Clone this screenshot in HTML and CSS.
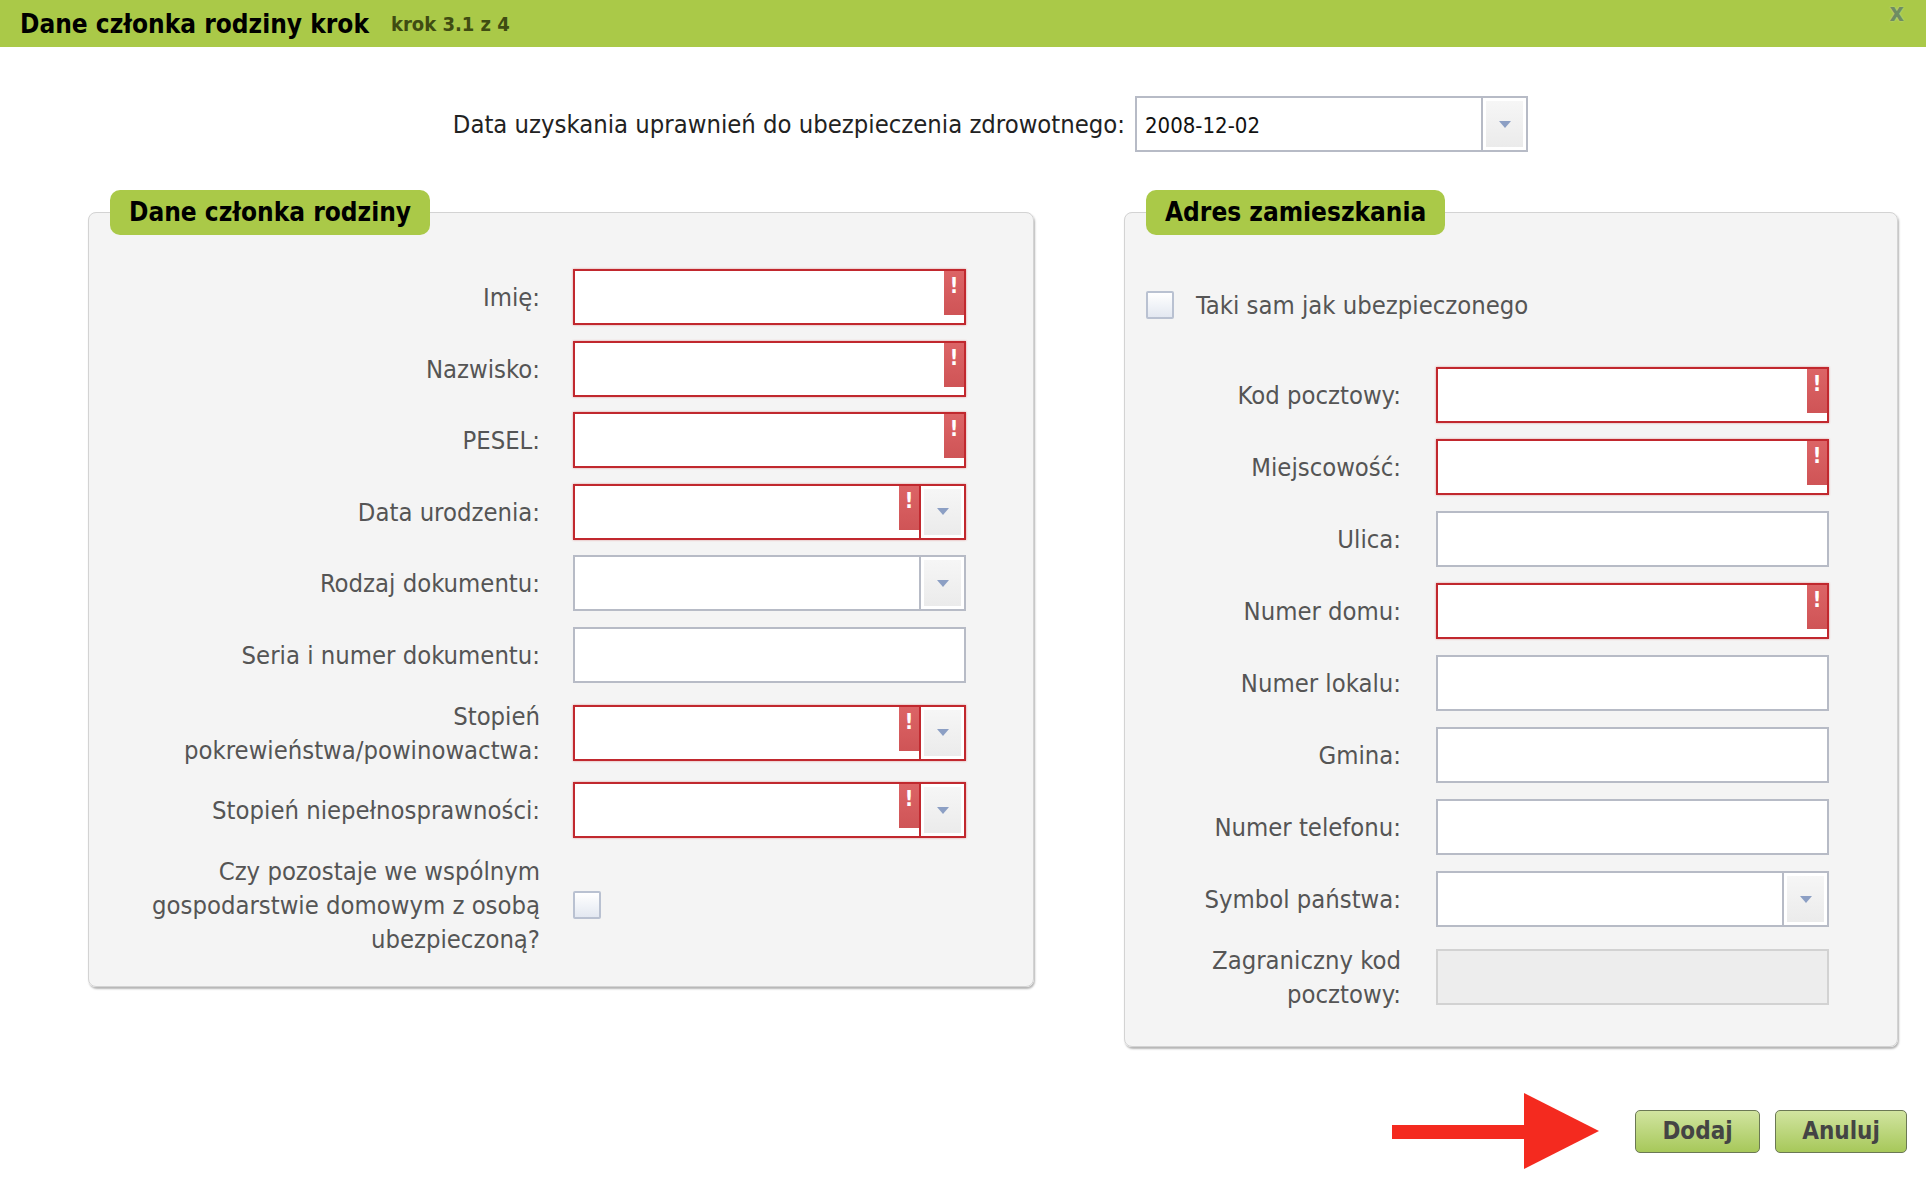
FILE: index.html
```html
<!DOCTYPE html>
<html lang="pl">
<head>
  <meta charset="UTF-8">
  <title>Dane członka rodziny</title>
  <link rel="stylesheet" href="styles.css">
</head>
<body>
  <div class="dialog">
    <!-- Title bar -->
    <div class="titlebar">
      <span class="title">Dane członka rodziny krok</span>
      <span class="step">krok 3.1 z 4</span>
      <span class="close">x</span>
    </div>

    <!-- Date of entitlement -->
    <div class="top-row">
      <label class="top-label">Data uzyskania uprawnień do ubezpieczenia zdrowotnego:</label>
      <div class="combo combo-date">
        <div class="field"><span class="value">2008-12-02</span></div>
        <div class="drop"><span class="drop-inner"><i class="tri"></i></span></div>
      </div>
    </div>

    <div class="panels">
      <!-- Family member -->
      <fieldset class="panel panel-left">
        <legend>Dane członka rodziny</legend>
        <div class="form form-left">
          <label>Imię:</label>
          <div class="input error"><span class="err">!</span></div>

          <label>Nazwisko:</label>
          <div class="input error"><span class="err">!</span></div>

          <label>PESEL:</label>
          <div class="input error"><span class="err">!</span></div>

          <label>Data urodzenia:</label>
          <div class="combo error">
            <div class="field"><span class="err">!</span></div>
            <div class="drop"><span class="drop-inner"><i class="tri"></i></span></div>
          </div>

          <label>Rodzaj dokumentu:</label>
          <div class="combo">
            <div class="field"></div>
            <div class="drop"><span class="drop-inner"><i class="tri"></i></span></div>
          </div>

          <label>Seria i numer dokumentu:</label>
          <div class="input"></div>

          <label>Stopień<br>pokrewieństwa/powinowactwa:</label>
          <div class="combo error">
            <div class="field"><span class="err">!</span></div>
            <div class="drop"><span class="drop-inner"><i class="tri"></i></span></div>
          </div>

          <label>Stopień niepełnosprawności:</label>
          <div class="combo error">
            <div class="field"><span class="err">!</span></div>
            <div class="drop"><span class="drop-inner"><i class="tri"></i></span></div>
          </div>

          <label>Czy pozostaje we wspólnym<br>gospodarstwie domowym z osobą<br>ubezpieczoną?</label>
          <div><span class="check"></span></div>
        </div>
      </fieldset>

      <!-- Address -->
      <fieldset class="panel panel-right">
        <legend>Adres zamieszkania</legend>
        <div class="same-row">
          <span class="check"></span>
          <span class="same-text">Taki sam jak ubezpieczonego</span>
        </div>
        <div class="form form-right">
          <label>Kod pocztowy:</label>
          <div class="input error"><span class="err">!</span></div>

          <label>Miejscowość:</label>
          <div class="input error"><span class="err">!</span></div>

          <label>Ulica:</label>
          <div class="input"></div>

          <label>Numer domu:</label>
          <div class="input error"><span class="err">!</span></div>

          <label>Numer lokalu:</label>
          <div class="input"></div>

          <label>Gmina:</label>
          <div class="input"></div>

          <label>Numer telefonu:</label>
          <div class="input"></div>

          <label>Symbol państwa:</label>
          <div class="combo">
            <div class="field"></div>
            <div class="drop"><span class="drop-inner"><i class="tri"></i></span></div>
          </div>

          <label>Zagraniczny kod<br>pocztowy:</label>
          <div class="input disabled"></div>
        </div>
      </fieldset>
    </div>

    <!-- Buttons -->
    <div class="actions">
      <svg class="arrow" width="207" height="76" viewBox="0 0 207 76">
        <rect x="0" y="32" width="136" height="14" fill="#f42a1f"/>
        <polygon points="132,0 207,38 132,76" fill="#f42a1f"/>
      </svg>
      <button class="btn btn-add">Dodaj</button>
      <button class="btn btn-cancel">Anuluj</button>
    </div>
  </div>
</body>
</html>
```

FILE: styles.css
```css
/* Reset */
* {
  margin: 0;
  padding: 0;
  box-sizing: border-box;
}

body {
  background: #ffffff;
  font-family: "DejaVu Sans Condensed", "DejaVu Sans", sans-serif;
  font-stretch: condensed;
  width: 1926px;
  height: 1188px;
  overflow: hidden;
}

/* Title bar */
.titlebar {
  display: flex;
  align-items: center;
  height: 47px;
  background: #aac948;
  padding: 0 22px 0 20px;
}

.title {
  font-size: 26px;
  font-weight: bold;
  color: #000;
}

.step {
  margin-left: 22px;
  font-size: 20px;
  font-weight: bold;
  color: #3f4c12;
}

.close {
  margin-left: auto;
  align-self: flex-start;
  margin-top: -2px;
  font-size: 25px;
  font-weight: bold;
  color: #6f8d62;
  text-shadow: 0 0 2px #c9dc98;
}

/* Top date row */
.top-row {
  display: flex;
  align-items: center;
  margin-top: 49px;
}

.top-label {
  flex: 0 0 1135px;
  padding-right: 10px;
  text-align: right;
  font-size: 25.4px;
  color: #222;
}

.combo-date {
  width: 393px;
  height: 59px;
  border-color: #bfc3cc;
}

.combo-date .value {
  display: block;
  padding: 15px 0 0 8px;
  font-size: 22px;
  color: #111;
}

/* Panels */
.panels {
  display: flex;
  align-items: flex-start;
  gap: 90px;
  margin-top: 38px;
  padding-left: 88px;
}

.panel {
  background: #f4f4f4;
  border: 1px solid #d3d3d3;
  border-radius: 8px;
  box-shadow: 1px 2px 2px #b5b5b5;
}

.panel legend {
  margin-left: 21px;
  height: 45px;
  padding: 0 19px;
  line-height: 45px;
  background: #aac948;
  border-radius: 10px;
  font-size: 26px;
  font-weight: bold;
  color: #000;
}

.panel-left {
  width: 946px;
  padding: 34px 0 30px;
}

.panel-right {
  width: 774px;
  padding: 0 0 35px;
}

/* Form grids */
.form {
  display: grid;
  row-gap: 16px;
  align-items: center;
}

.form-left {
  grid-template-columns: 451px 393px;
  column-gap: 33px;
  row-gap: 15.6px;
}

.form-right {
  grid-template-columns: 276px 393px;
  column-gap: 35px;
}

.form label {
  text-align: right;
  font-size: 25.4px;
  line-height: 34px;
  color: #555;
}

.same-row {
  display: flex;
  align-items: center;
  gap: 22px;
  padding: 55px 0 0 21px;
  margin-bottom: 47px;
}

.same-text {
  font-size: 25.4px;
  color: #555;
}

/* Inputs */
.input,
.combo {
  position: relative;
  height: 56px;
  background: #fff;
  border: 2px solid #b7bbc6;
}

.combo {
  display: flex;
}

.combo .field {
  position: relative;
  flex: 1;
}

.combo .drop {
  width: 45px;
  border-left: 2px solid #b7bbc6;
  padding: 3px;
  background: #fff;
}

.drop-inner {
  display: flex;
  align-items: center;
  justify-content: center;
  height: 100%;
  background: linear-gradient(#f6f6f6, #ebebeb);
}

.tri {
  width: 0;
  height: 0;
  border-left: 6px solid transparent;
  border-right: 6px solid transparent;
  border-top: 7px solid #8c9fc4;
}

.error,
.error .drop {
  border-color: #c1282e;
}

.error {
  box-shadow: 0 0 2px rgba(200, 40, 40, 0.45);
}

.err {
  position: absolute;
  top: 0;
  right: 0;
  width: 20px;
  height: 44px;
  background: linear-gradient(#dc6466, #cf5456);
  color: #fff;
  font-size: 21px;
  font-weight: bold;
  text-align: center;
  line-height: 30px;
}

.disabled {
  background: #ededed;
  border-color: #d2d2d2;
}

.check {
  display: block;
  width: 28px;
  height: 28px;
  border: 2px solid #b9c1d1;
  border-radius: 2px;
  background: linear-gradient(#ffffff, #e3e8f1);
}

/* Bottom buttons */
.actions {
  display: flex;
  justify-content: flex-end;
  align-items: center;
  gap: 15px;
  margin-top: 46px;
  padding-right: 19px;
}

.arrow {
  margin-right: 21px;
}

.btn {
  height: 43px;
  border: 1px solid #6b7854;
  border-radius: 5px;
  background: linear-gradient(#d1e4a0, #a7c85a);
  font-family: inherit;
  font-size: 24px;
  font-weight: bold;
  color: #444;
  cursor: pointer;
}

.btn-add {
  width: 125px;
}

.btn-cancel {
  width: 132px;
}
```
